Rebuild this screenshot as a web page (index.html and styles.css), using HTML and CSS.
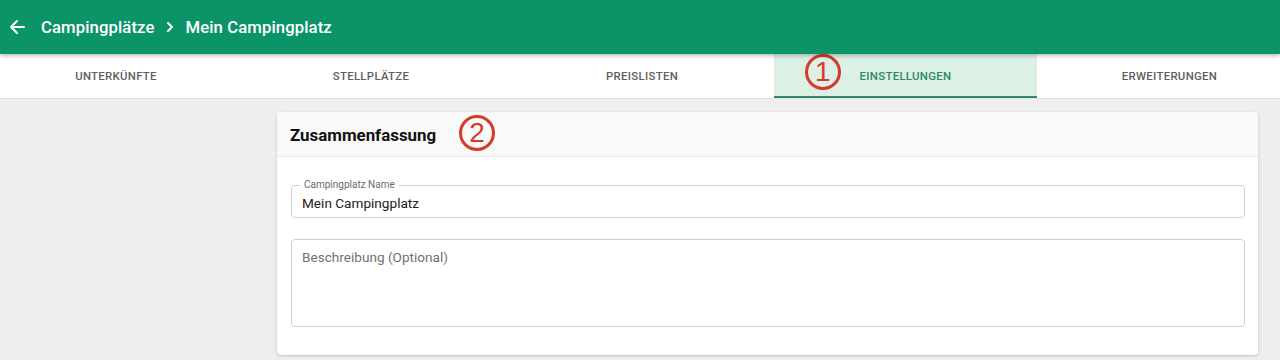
FILE: index.html
```html
<!DOCTYPE html>
<html lang="de">
<head>
<meta charset="utf-8">
<link rel="stylesheet" href="styles.css">
</head>
<body>
<header class="appbar">
  <svg class="back" width="16" height="16" viewBox="0 0 16 16" aria-hidden="true">
    <path d="M15 8H2.5M8 2L2 8l6 6" fill="none" stroke="#fff" stroke-width="2" stroke-linecap="round" stroke-linejoin="round"/>
  </svg>
  <span class="crumb">Campingplätze</span>
  <svg class="chev" width="8" height="12" viewBox="0 0 8 12" aria-hidden="true">
    <path d="M2 2l4 4-4 4" fill="none" stroke="#fff" stroke-width="2" stroke-linecap="round" stroke-linejoin="round"/>
  </svg>
  <span class="crumb">Mein Campingplatz</span>
</header>
<nav class="tabs">
  <div class="tab">Unterkünfte</div>
  <div class="tab">Stellplätze</div>
  <div class="tab">Preislisten</div>
  <div class="tab active">Einstellungen<span class="mark mark-1">1</span></div>
  <div class="tab">Erweiterungen</div>
</nav>
<main class="content">
  <section class="card">
    <div class="card-head">
      <h2 class="card-title">Zusammenfassung</h2>
      <span class="mark mark-2">2</span>
    </div>
    <div class="card-body">
      <div class="field">
        <span class="field-label">Campingplatz Name</span>
        <div class="field-value">Mein Campingplatz</div>
      </div>
      <div class="field area">
        <div class="placeholder">Beschreibung (Optional)</div>
      </div>
    </div>
  </section>
</main>
</body>
</html>
```

FILE: styles.css
```css
* { box-sizing: border-box; }
html, body { margin: 0; padding: 0; }
body {
  width: 1280px;
  height: 360px;
  overflow: hidden;
  background: #eeeeee;
  font-family: Roboto, "Liberation Sans", sans-serif;
  color: #222;
}
.appbar {
  height: 54px;
  background: #0b9467;
  display: flex;
  align-items: center;
  padding: 0 0 0 9px;
  color: #fff;
  position: relative;
  z-index: 2;
  box-shadow: 0 2px 4px rgba(0,0,0,0.25);
}
.back { margin-right: 16px; }
.crumb {
  font-size: 16.7px;
  font-weight: 500;
  letter-spacing: 0.1px;
}
.chev { margin: 0 12px 0 11px; }
.tabs {
  height: 45px;
  background: #fff;
  display: grid;
  grid-template-columns: 232px 278px 264px 263px 265px;
  overflow: hidden;
  border-bottom: 1px solid #e2e2e2;
}
.tab {
  position: relative;
  display: flex;
  align-items: center;
  justify-content: center;
  font-size: 11.4px;
  font-weight: 500;
  text-transform: uppercase;
  color: #5f5f5f;
  letter-spacing: 0.3px;
}
.tab.active {
  background: #dcf0e6;
  color: #2b8a63;
  border-bottom: 2px solid #2f8a66;
  padding-top: 2px;
}
.mark {
  position: absolute;
  width: 36px;
  height: 36px;
  border: 3px solid #d63a2a;
  border-radius: 50%;
  color: #d63a2a;
  font-family: "Liberation Sans", sans-serif;
  font-size: 28px;
  line-height: 30px;
  text-align: center;
}
.mark-1 { left: 31px; top: 0px; }
.mark-2 { left: 182px; top: 3px; }
.content {
  padding: 13px 22px 0 277px;
}
.card {
  background: #fff;
  border-radius: 4px;
  box-shadow: 0 1px 3px rgba(0,0,0,0.2);
  height: 243px;
  overflow: hidden;
}
.card-head {
  position: relative;
  height: 45px;
  background: #f9f9f9;
  border-bottom: 1px solid #ececec;
  display: flex;
  align-items: center;
  padding: 0 13px;
}
.card-title {
  margin: 0;
  font-size: 16.9px;
  font-weight: 700;
  color: #111;
  padding-top: 2px;
}
.card-body {
  padding: 28px 13px 0 14px;
  display: flex;
  flex-direction: column;
  gap: 21px;
}
.field {
  position: relative;
  height: 33px;
  border: 1px solid #cfcfcf;
  border-radius: 4px;
  padding: 0 10px;
  display: flex;
  align-items: center;
}
.field-label {
  position: absolute;
  left: 8px;
  top: -7px;
  padding: 0 4px;
  background: #fff;
  font-size: 10px;
  line-height: 12px;
  color: #6b6b6b;
}
.field-value {
  font-size: 13.6px;
  color: #222;
  padding-top: 2px;
}
.field.area {
  height: 88px;
  align-items: flex-start;
  padding-top: 9px;
}
.placeholder {
  font-size: 13.6px;
  color: #707070;
}
```
